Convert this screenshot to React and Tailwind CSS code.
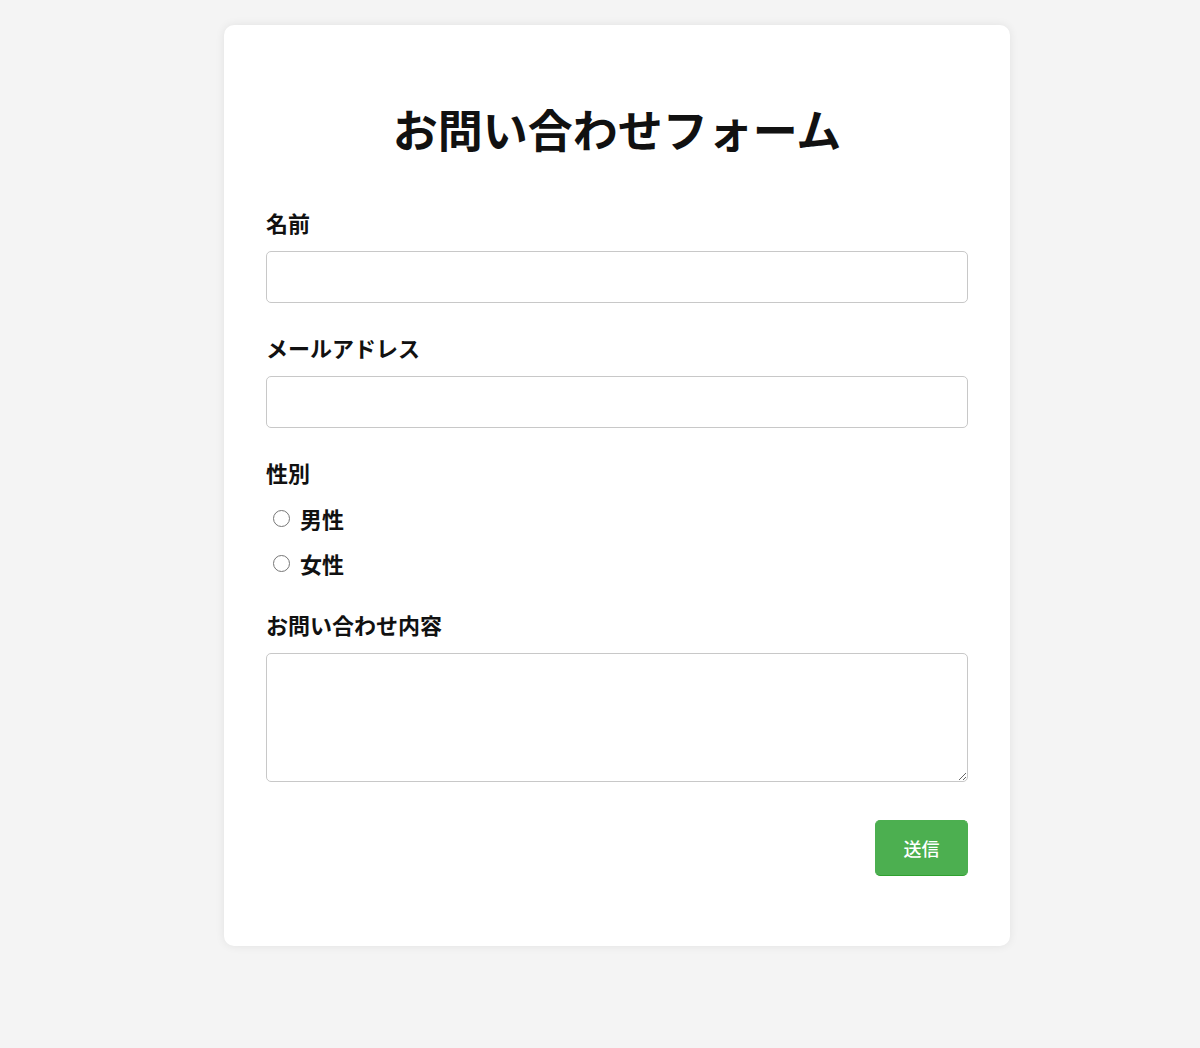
import { useState } from "react";

const font = { fontFamily: '"Noto Sans CJK JP", "Noto Sans", sans-serif' };

function Field({ label, children }) {
  return (
    <div className="mb-[33px]">
      <label className="block text-[22px] leading-none font-bold text-[#111] mb-[18px]">{label}</label>
      {children}
    </div>
  );
}

export default function App() {
  const [gender, setGender] = useState("");

  return (
    <div className="min-h-[1048px] bg-[#f4f4f4] pt-[25px] pl-[34px]" style={font}>
      <form
        className="mx-auto w-[786px] bg-white rounded-[10px] shadow-[0_0_10px_rgba(0,0,0,0.08)] px-[42px] pt-[81px] pb-[70px]"
        onSubmit={(e) => e.preventDefault()}
      >
        <h1 className="text-center text-[45px] leading-none font-bold text-[#111] mb-[60px]">お問い合わせフォーム</h1>

        <Field label="名前">
          <input type="text" className="block w-full h-[52px] border border-[#c8c8c8] rounded-[5px] px-3 text-lg outline-none" />
        </Field>

        <Field label="メールアドレス">
          <input type="email" className="block w-full h-[52px] border border-[#c8c8c8] rounded-[5px] px-3 text-lg outline-none" />
        </Field>

        <div className="mb-[39px]">
          <div className="text-[22px] leading-none font-bold text-[#111] mb-[24px]">性別</div>
          <div className="flex flex-col gap-[23px]">
            {["男性", "女性"].map((g) => (
              <label key={g} className="flex items-center text-[22px] leading-none font-bold text-[#111]">
                <input
                  type="radio"
                  name="gender"
                  checked={gender === g}
                  onChange={() => setGender(g)}
                  className="appearance-none w-[17px] h-[17px] rounded-full border border-[#767676] bg-white ml-[7px] mr-[10px] checked:border-[5px] checked:border-[#0075ff]"
                />
                {g}
              </label>
            ))}
          </div>
        </div>

        <div className="mb-[38px]">
          <label className="block text-[22px] leading-none font-bold text-[#111] mb-[18px]">お問い合わせ内容</label>
          <textarea className="block w-full h-[129px] border border-[#c8c8c8] rounded-[5px] px-3 py-2 text-lg outline-none" />
        </div>

        <div className="flex justify-end">
          <button
            type="submit"
            className="w-[93px] h-[56px] bg-[#4caf50] text-white text-[18px] font-medium rounded-[5px] border border-[#4caf50] border-b-[#2fa12f]"
          >
            送信
          </button>
        </div>
      </form>
    </div>
  );
}
